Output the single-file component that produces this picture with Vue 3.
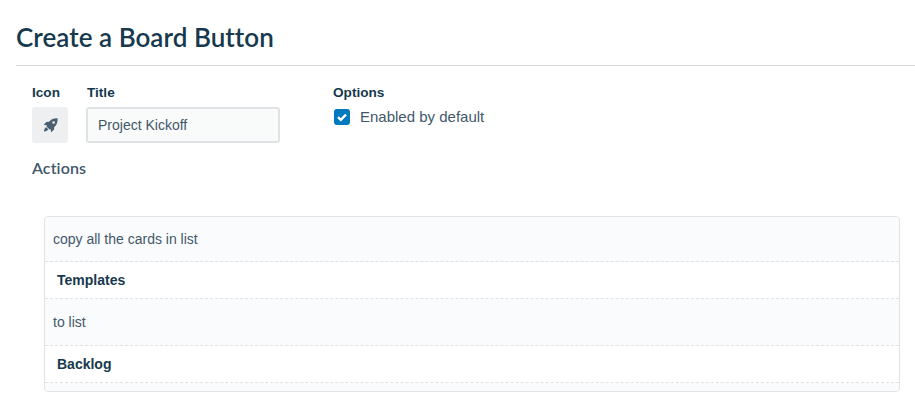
<script setup>
const rows = [
  { text: 'copy all the cards in list', kind: 'text short' },
  { text: 'Templates', kind: 'value first' },
  { text: 'to list', kind: 'text' },
  { text: 'Backlog', kind: 'value' },
]
</script>

<template>
  <div class="page">
    <h1 class="title">Create a Board Button</h1>
    <div class="form">
      <div class="top">
        <div class="field icon-field">
          <div class="label">Icon</div>
          <div class="icon-box">
            <svg width="15" height="15" viewBox="0 0 16 16" aria-hidden="true">
              <path fill="#4a5f70" d="M15.600.4C11.800.2 8.600 1.400 6.400 4L3.400 4.300.8 7.400l3.300.4-.3 1.300 3.100 3.100 1.300-.3.400 3.300 3.100-2.600.3-3C14.600 7.400 15.800 4.200 15.600.4zM11.300 6.200a1.400 1.400 0 1 1 0-2.800 1.400 1.400 0 0 1 0 2.800z"/>
              <path fill="#4a5f70" d="M3.400 9.800C2 10.400 1.200 12 1 14.400c2.400-.1 4-1 4.600-2.400z"/>
            </svg>
          </div>
        </div>
        <div class="field title-field">
          <div class="label title-label">Title</div>
          <input class="input" value="Project Kickoff" />
        </div>
        <div class="field options-field">
          <div class="label">Options</div>
          <label class="check">
            <span class="box">
              <svg width="12" height="12" viewBox="0 0 12 12" aria-hidden="true">
                <path d="M2 6.200 4.800 8.800 10 3.600" fill="none" stroke="#fff" stroke-width="2.400"/>
              </svg>
            </span>
            Enabled by default
          </label>
        </div>
      </div>
      <div class="actions-title">Actions</div>
    </div>
    <div class="card">
      <div v-for="row in rows" :key="row.text" class="row" :class="row.kind">{{ row.text }}</div>
      <div class="tail"></div>
    </div>
  </div>
</template>

<style scoped>
.page {
  width: 915px;
  height: 406px;
  overflow: hidden;
  box-sizing: border-box;
  padding: 20px 0 0 16px;
  background: #fff;
  font-family: "Liberation Sans", Arial, sans-serif;
  font-size: 14px;
  color: #42586a;
}
.title {
  margin: 0;
  height: 45px;
  line-height: 35px;
  box-sizing: content-box;
  border-bottom: 1px solid #d6dadc;
  font-family: Lato, sans-serif;
  font-size: 26px;
  font-weight: 600;
  letter-spacing: 0.04px;
  color: #17394d;
}
.form {
  padding: 18px 0 0 16px;
}
.top {
  display: flex;
}
.label {
  height: 23px;
  line-height: 17px;
  font-weight: 700;
  font-size: 13.6px;
  color: #17394d;
}
.title-label {
  padding-left: 1px;
}
.icon-field {
  width: 54px;
}
.title-field {
  width: 247px;
}
.icon-box {
  width: 36px;
  height: 36px;
  border-radius: 3px;
  background: #edeff0;
  display: flex;
  align-items: center;
  justify-content: center;
}
.input {
  display: block;
  width: 194px;
  height: 36px;
  box-sizing: border-box;
  margin: 0;
  padding: 0 10px;
  border: 2px solid #dfe3e6;
  border-radius: 3px;
  background: #f9fafa;
  font: 14px "Liberation Sans", Arial, sans-serif;
  color: #42586a;
  outline: none;
}
.check {
  display: flex;
  align-items: center;
  gap: 10px;
  height: 17px;
  margin-top: 1px;
  padding-left: 1px;
  font-size: 15px;
}
.box {
  width: 16px;
  height: 16px;
  border-radius: 3px;
  background: #0079bf;
  display: flex;
  align-items: center;
  justify-content: center;
}
.actions-title {
  margin-top: 16px;
  height: 18px;
  line-height: 18px;
  font-family: Lato, sans-serif;
  font-size: 16px;
  font-weight: 600;
  letter-spacing: 0.1px;
  color: #42586a;
}
.card {
  margin: 39px 0 0 28px;
  width: 856px;
  height: 176px;
  box-sizing: border-box;
  border: 1px solid #dfe3e6;
  border-radius: 4px;
  overflow: hidden;
}
.row {
  border-bottom: 1px dashed #dfe3e6;
  box-sizing: border-box;
  padding-left: 8px;
  display: flex;
  align-items: center;
}
.text {
  height: 47px;
  background: #fafbfc;
  font-size: 14px;
}
.short {
  height: 45px;
}
.value {
  height: 37px;
  font-weight: 700;
  font-size: 14px;
  color: #17394d;
  padding-left: 12px;
}
.first {
  padding-left: 12px;
}
.tail {
  height: 8px;
  background: #fafbfc;
}
</style>
